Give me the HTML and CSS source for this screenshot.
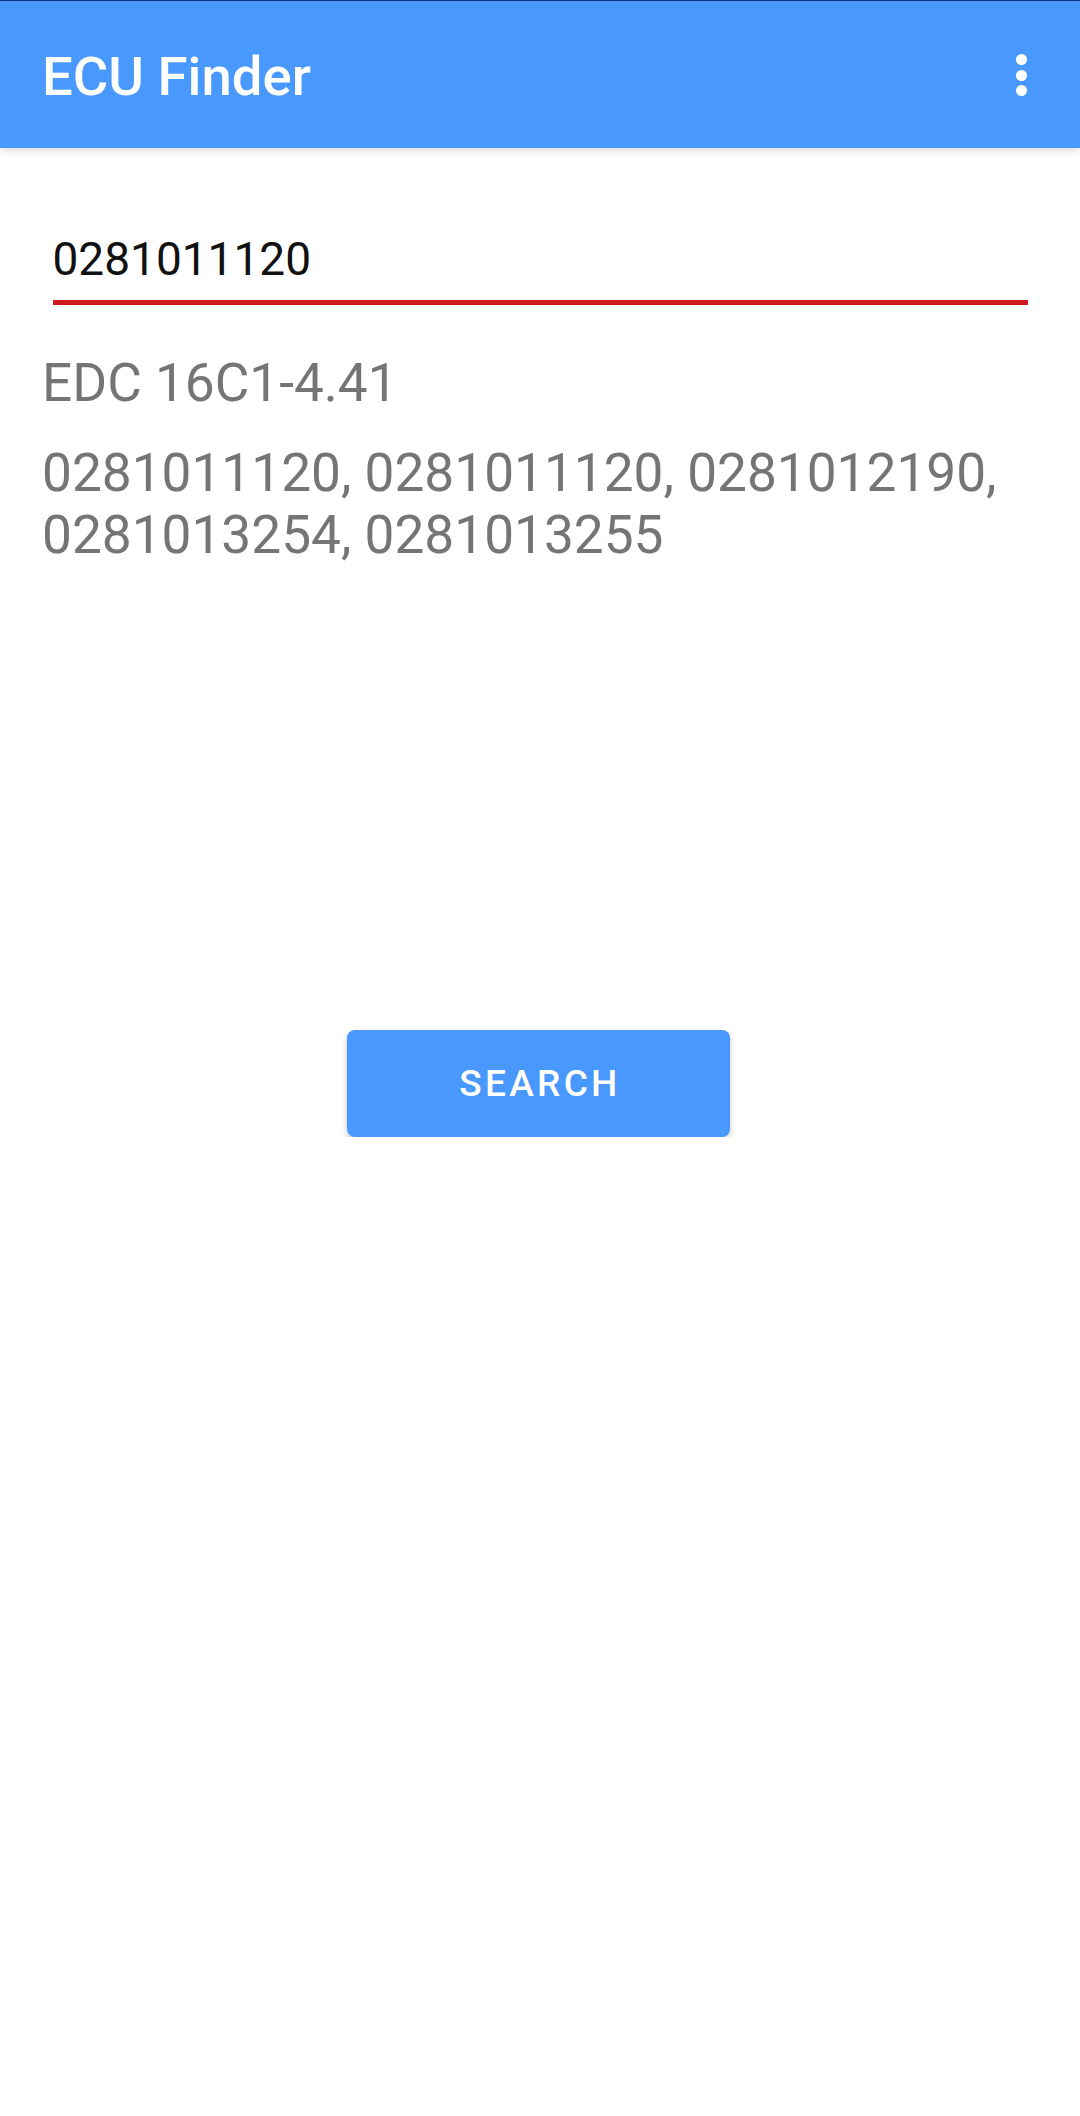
FILE: index.html
```html
<!DOCTYPE html>
<html>
<head>
<meta charset="utf-8">
<link rel="stylesheet" href="styles.css">
</head>
<body>
<header class="appbar">
  <h1 class="title">ECU Finder</h1>
  <div class="menu"><span class="dot"></span><span class="dot"></span><span class="dot"></span></div>
</header>
<main class="content">
  <div class="field">
    <div class="field-text">0281011120</div>
    <div class="field-line"></div>
  </div>
  <p class="result-name">EDC 16C1-4.41</p>
  <p class="result-list">0281011120, 0281011120, 0281012190, 0281013254, 0281013255</p>
  <div class="actions">
    <button class="search-btn">SEARCH</button>
  </div>
</main>
</body>
</html>
```
FILE: styles.css
```css
html, body {
  margin: 0;
  padding: 0;
  background: #ffffff;
  font-family: Roboto, "Noto Sans", sans-serif;
}

.appbar {
  position: relative;
  z-index: 1;
  box-sizing: border-box;
  height: 148px;
  background: #4898fd;
  border-top: 1px solid #0e347f;
  display: flex;
  align-items: center;
  justify-content: space-between;
  padding: 2px 0 0 42px;
  box-shadow: 0 3px 8px rgba(0, 0, 0, 0.13);
}

.title {
  margin: 0;
  font-size: 54.5px;
  font-weight: 500;
  color: #ffffff;
  line-height: 62px;
}

.menu {
  width: 11px;
  margin-right: 53px;
  margin-top: -1px;
  display: flex;
  flex-direction: column;
  gap: 4.5px;
}

.dot {
  display: block;
  width: 11px;
  height: 11px;
  border-radius: 50%;
  background: #ffffff;
}

.content {
  padding: 0 42px;
}

.field {
  margin: 84px 10.5px 0;
}

.field-text {
  font-size: 46px;
  line-height: 54px;
  color: #111111;
}

.field-line {
  margin-top: 14px;
  height: 5px;
  background: #d0181f;
}

.result-name {
  margin: 47px 0 0;
  font-size: 53.2px;
  line-height: 62px;
  color: #757575;
}

.result-list {
  margin: 28px 0 0;
  font-size: 53.2px;
  line-height: 62px;
  color: #757575;
}

.actions {
  display: flex;
  justify-content: center;
  margin-top: 464px;
  padding-right: 3px;
}

.search-btn {
  width: 383px;
  height: 107px;
  border: none;
  border-radius: 8px;
  background: #4898fd;
  color: #ffffff;
  font-family: Roboto, "Noto Sans", sans-serif;
  font-size: 37px;
  font-weight: 500;
  letter-spacing: 3.3px;
  box-shadow: 0 3px 6px rgba(0, 0, 0, 0.22);
  padding: 0 0 0 3px;
}
```
